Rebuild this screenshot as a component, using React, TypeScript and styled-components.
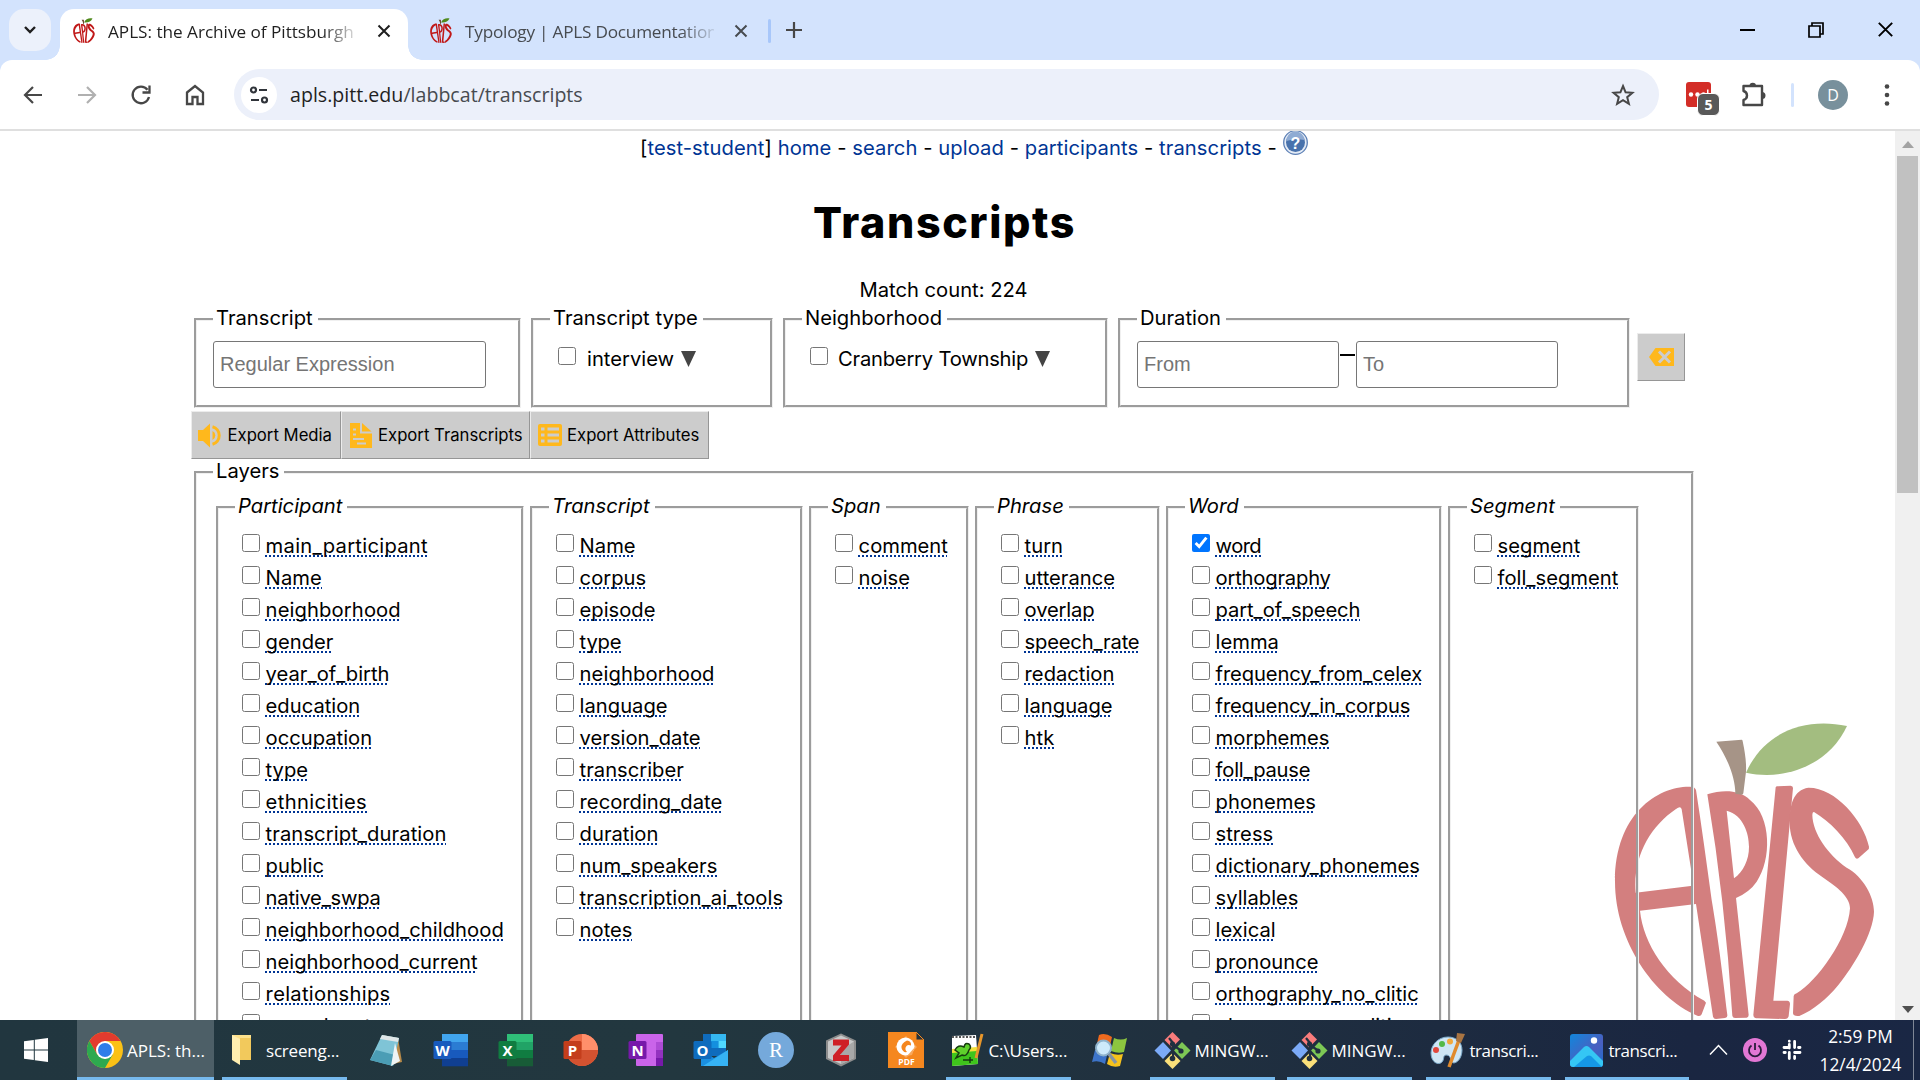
import React from 'react';
import styled, { createGlobalStyle } from 'styled-components';

const GlobalStyle = createGlobalStyle`
  *, *::before, *::after { box-sizing: border-box; }
  html, body { margin: 0; padding: 0; overflow: hidden; }
  body { background: #fff; }
`;

const ui = '"Open Sans", "Noto Sans", sans-serif';
const body = 'Inter, "Liberation Sans", sans-serif';
const amber = '#ffb81c';

const Screen = styled.div`
  width: 1920px;
  height: 1080px;
  display: flex;
  flex-direction: column;
  overflow: hidden;
  font-family: ${ui};
`;

/* ---------- browser chrome ---------- */

const TabStrip = styled.div`
  height: 60px;
  flex: none;
  background: #d3e3fd;
  display: flex;
  align-items: flex-start;
  padding: 9px 0 0 9px;
`;

const TabSearch = styled.button`
  width: 42px;
  height: 42px;
  border: 0;
  padding: 0;
  border-radius: 15px;
  background: #ecf1fb;
  display: grid;
  place-items: center;
`;

const Tab = styled.div<{ $active?: boolean; $w: number }>`
  position: relative;
  width: ${p => p.$w}px;
  height: 51px;
  margin-left: ${p => (p.$active ? 9 : 0)}px;
  padding: 0 0 8px ${p => (p.$active ? 13 : 22)}px;
  display: flex;
  align-items: center;
  border-radius: 14px 14px 0 0;
  background: ${p => (p.$active ? '#fff' : 'transparent')};
  &::before, &::after {
    content: '';
    display: ${p => (p.$active ? 'block' : 'none')};
    position: absolute;
    bottom: 0;
    width: 14px;
    height: 14px;
  }
  &::before { left: -14px; background: radial-gradient(circle at 0 0, transparent 13.5px, #fff 14px); }
  &::after { right: -14px; background: radial-gradient(circle at 100% 0, transparent 13.5px, #fff 14px); }
`;

const TabTitle = styled.span<{ $w: number; $dim?: boolean }>`
  width: ${p => p.$w}px;
  margin: 2px 0 0 13px;
  overflow: hidden;
  white-space: nowrap;
  font-size: 17.2px;
  letter-spacing: ${p => (p.$dim ? -0.22 : -0.03)}px;
  line-height: 26px;
  color: ${p => (p.$dim ? '#474b50' : '#1f1f1f')};
  mask-image: linear-gradient(90deg, #000 calc(100% - 34px), rgba(0, 0, 0, 0.15));
`;

const TabClose = styled.span<{ $gap: number }>`
  margin-left: ${p => p.$gap}px;
  width: 14px;
  height: 14px;
  display: grid;
`;

const StripDivider = styled.div`
  width: 3px;
  height: 24px;
  margin: 10px 0 0 7px;
  border-radius: 2px;
  background: #a8c7fa;
`;

const NewTab = styled.div`
  margin: 12px 0 0 14px;
  width: 18px;
  height: 18px;
  display: grid;
`;

const WindowButtons = styled.div`
  margin: 12px 26px 0 auto;
  display: flex;
  align-items: center;
  gap: 53px;
  svg { display: block; }
`;

const Toolbar = styled.div`
  height: 71px;
  flex: none;
  display: flex;
  align-items: center;
  padding: 0 27px 0 21px;
  background: #fff;
  border-bottom: 2px solid #dfdfdf;
  svg { display: block; flex: none; }
`;

const StripUnderlay = styled.div`
  background: linear-gradient(#d3e3fd 0 14px, #fff 14px);
  flex: none;
  ${Toolbar} { border-radius: 12px 12px 0 0; }
`;

const NavIcons = styled.div`
  display: flex;
  gap: 30px;
  margin-right: 27px;
`;

const Omnibox = styled.div`
  width: 1425px;
  height: 51px;
  display: flex;
  align-items: center;
  padding: 0 24px 0 7px;
  border-radius: 26px;
  background: #ecf0fa;
`;

const SiteInfo = styled.span`
  width: 36px;
  height: 36px;
  border-radius: 50%;
  background: #fff;
  display: grid;
  place-items: center;
`;

const Url = styled.span`
  margin-left: 13px;
  flex: 1;
  font-size: 19.6px;
  line-height: 30px;
  color: #474b50;
  b { font-weight: 400; color: #1f1f1f; }
`;

const Extension = styled.div`
  position: relative;
  width: 25px;
  height: 25px;
  margin-left: 27px;
  border-radius: 3px;
  background: #d32d27;
`;

const ExtensionBadge = styled.span`
  position: absolute;
  left: 11px;
  top: 11px;
  width: 23px;
  height: 23px;
  border: 1px solid #fff;
  border-radius: 6px;
  background: #595959;
  color: #fff;
  font: 700 14px/21px ${ui};
  text-align: center;
`;

const PuzzleSlot = styled.div`margin-left: 30px;`;

const ToolDivider = styled.div`
  width: 3px;
  height: 24px;
  margin-left: 24px;
  border-radius: 2px;
  background: #d3e3fd;
`;

const Avatar = styled.div`
  width: 30px;
  height: 30px;
  margin: 0 auto 0 24px;
  border-radius: 50%;
  background: #78909c;
  color: #fff;
  font-size: 16px;
  line-height: 30px;
  text-align: center;
`;

/* ---------- web page ---------- */

const Viewport = styled.div`
  flex: 1;
  min-height: 0;
  display: flex;
  background: #fff;
`;

const Page = styled.main`
  position: relative;
  width: 1895px;
  overflow: hidden;
  font-family: ${body};
  font-size: 20.2px;
  color: #000;
`;

const Watermark = styled.div`
  position: absolute;
  left: 1590px;
  top: 569px;
  svg { display: block; }
`;

const Content = styled.div`position: relative;`;

const SiteNav = styled.nav`
  height: 34px;
  display: flex;
  align-items: flex-start;
  padding-left: 640px;
  white-space: pre;
  line-height: 34px;
  letter-spacing: 0.07px;
  a { color: #003594; text-decoration: none; }
  svg { margin-top: -1px; }
`;

const Title = styled.h1`
  margin: 32px 0 0;
  width: 1889px;
  text-align: center;
  font-size: 43px;
  font-weight: 800;
  letter-spacing: 1.6px;
  line-height: 50px;
`;

const MatchCount = styled.div`
  width: 1887px;
  margin-top: 29px;
  height: 30px;
  line-height: 27px;
  text-align: center;
`;

const Filters = styled.div`
  display: flex;
  gap: 10px;
  padding-left: 194px;
`;

const Box = styled.fieldset<{ $w: number; $h: number }>`
  width: ${p => p.$w}px;
  height: ${p => p.$h}px;
  min-width: 0;
  flex: none;
  margin: 0;
  padding: 8px 0 0 16px;
  border: 3px groove #f0f0f0;
`;

const Legend = styled.legend<{ $italic?: boolean }>`
  height: 27px;
  padding: 0 5px 0 3px;
  line-height: 23px;
  font-style: ${p => (p.$italic ? 'italic' : 'normal')};
`;

const TextInput = styled.input<{ $w: number }>`
  width: ${p => p.$w}px;
  height: 47px;
  padding: 0 6px 1px;
  border: 1px solid #767676;
  border-radius: 3px;
  font: 20px "Liberation Sans", Arial, sans-serif;
  background: #fff;
  &::placeholder { color: #757575; }
`;

const Check = styled.input.attrs({ type: 'checkbox' })`
  width: 18px;
  height: 18px;
  margin: 0;
  flex: none;
`;

const Option = styled.div<{ $gap: number; $track?: number }>`
  display: flex;
  padding: 6px 0 0 8px;
  > span {
    margin: 0 7px 0 ${p => p.$gap}px;
    line-height: 24px;
    letter-spacing: ${p => p.$track || 0}px;
  }
  svg { margin-top: 4px; }
`;

const Range = styled.div`
  display: flex;
`;

const RangeDash = styled.span`
  width: 15px;
  margin: 13px 1px 0;
  height: 2px;
  background: #000;
`;

const ActionButton = styled.button<{ $w: number; $pad: number; $gap: number }>`
  width: ${p => p.$w}px;
  height: 48px;
  flex: none;
  display: flex;
  align-items: center;
  gap: ${p => p.$gap}px;
  padding: 0 0 0 ${p => p.$pad}px;
  border: 1px solid;
  border-color: #ececec #969696 #969696 #ececec;
  background: #ccc;
  font: 16.7px ${body};
  color: #000;
  white-space: nowrap;
  svg { display: block; flex: none; }
`;

const ClearSlot = styled.div`margin: 27px 0 0 -3px;`;

const Actions = styled.div`
  display: flex;
  padding: 3px 0 0 191px;
`;

const LayersIndent = styled.div`padding-left: 194px;`;

const LayerColumns = styled.div`
  display: flex;
  padding-left: 3px;
  gap: 6px;
`;

const LayerList = styled.ul`
  list-style: none;
  margin: 0;
  padding: 1px 0 0 7px;
`;

const LayerRow = styled.li`
  height: 32px;
  display: flex;
  align-items: flex-start;
  padding-top: 4px;
`;

const LayerName = styled.span<{ $track?: number }>`
  margin-left: 5.6px;
  line-height: 24px;
  white-space: nowrap;
  letter-spacing: ${p => p.$track || 0}px;
  text-decoration: underline dotted #003594 2px;
  text-underline-offset: 2px;
  text-decoration-skip-ink: none;
`;

const Scrollbar = styled.div`
  width: 25px;
  display: flex;
  flex-direction: column;
  align-items: center;
  background: #f0f0f0;
  padding: 10px 0 7px;
  svg { display: block; flex: none; }
`;

const ScrollThumb = styled.div`
  width: 21px;
  height: 337px;
  margin: 8px 0 auto;
  background: #c1c1c1;
`;

/* ---------- taskbar ---------- */

const Taskbar = styled.footer`
  height: 60px;
  flex: none;
  display: flex;
  background: linear-gradient(90deg, #21363f 0%, #22373f 35%, #20303f 62%, #1a2641 88%, #1a2744 100%);
  color: #fff;
  svg { display: block; flex: none; }
`;

const Slot = styled.div<{ $w: number; $ml?: number }>`
  width: ${p => p.$w}px;
  margin-left: ${p => p.$ml || 0}px;
  flex: none;
  display: grid;
  place-items: center;
`;

const Task = styled.div<{ $w: number; $ml?: number; $pad?: number; $active?: boolean; $gap?: number; $track?: number }>`
  width: ${p => p.$w}px;
  margin-left: ${p => p.$ml || 0}px;
  padding-left: ${p => p.$pad ?? 4}px;
  flex: none;
  display: flex;
  align-items: center;
  gap: ${p => p.$gap ?? 4}px;
  background: ${p => (p.$active ? '#4d5f67' : 'transparent')};
  box-shadow: inset 0 -3px 0 #76b9ed;
  font-size: 17px;
  letter-spacing: ${p => p.$track || 0}px;
  white-space: nowrap;
`;

const Tray = styled.div`
  display: flex;
  align-items: center;
  margin-left: 20px;
  gap: 15px;
`;

const Clock = styled.div`
  width: 90px;
  margin: 3px 0 0 14px;
  text-align: center;
  font-size: 17.3px;
  line-height: 28px;
`;

const ShowDesktop = styled.div`
  width: 7px;
  margin-left: auto;
  border-left: 1px solid #7f8796;
`;

/* ---------- drawings ---------- */

const Apple = ({ w, h, red, stem, leaf, box }: { w: number; h: number; red: string; stem: string; leaf: string; box: string }) => (
  <svg width={w} height={h} viewBox={box} preserveAspectRatio="none">
    <g fill={red} fillRule="evenodd">
      <path d="M300 260C205 258 75 340 75 545C75 720 190 890 322 947Q332 950 335 943L348 908L343 902C230 840 160 730 150 632L318 612L369 950Q371 957 378 957L405 954Q413 953 412 945C395 800 385 720 365 600C350 490 335 380 318 270Q315 260 300 260ZM275 328L303 507L308 557L137 578C128 470 180 380 258 327Q272 316 275 328Z" />
      <path d="M352 283C400 268 450 270 480 300C545 350 545 480 500 545Q480 575 438 594L476 945Q476 952 470 953L435 954Q428 954 427 947Q405 600 352 283ZM410 332C460 345 477 400 477 440C477 480 460 515 432 535Z" />
      <path d="M557 262Q558 259 562 259L602 257Q609 258 609 264L550 902L592 902Q600 903 600 912L596 948Q594 957 585 957L503 955Q490 955 490 945Z" />
      <path d="M655 263C735 262 820 360 837 440Q838 447 833 450L805 475Q799 479 795 472C770 415 720 365 672 336Q667 335 667 345C668 400 715 465 770 503C820 530 852 590 852 635C850 700 790 800 745 855C710 898 670 930 628 948Q610 950 609 940L611 888Q612 882 620 880C680 845 775 715 780 625C780 590 740 560 700 533C640 495 600 435 599 370C598 315 610 270 655 263Z" />
    </g>
    <path fill={stem} d="M379 125L455 119Q458 119 458 124Q470 180 468 215L460 280Q459 284 454 284L436 281C436 230 410 170 379 125Z" />
    <path fill={leaf} d="M468 218C520 100 640 50 771 78C720 190 590 245 468 218Z" />
  </svg>
);

const Favicon = () => <Apple w={22} h={25} red="#c01818" stem="#6b4a30" leaf="#4f8a1c" box="70 60 790 900" />;

const Cross = ({ size = 14, c = '#1f1f1f', sw = 2 }: { size?: number; c?: string; sw?: number }) => (
  <svg width={size} height={size} viewBox="0 0 14 14"><path d="M1.5 1.5L12.5 12.5M12.5 1.5L1.5 12.5" stroke={c} strokeWidth={sw} /></svg>
);

const Down = () => <svg width="15" height="16" viewBox="0 0 15 16"><path d="M0 0H15L7.5 16Z" fill="#444" /></svg>;

const OfficeIcon = ({ letter, tile, shades }: { letter: string; tile: string; shades: string[] }) => (
  <svg width="36" height="36" viewBox="0 0 36 36">
    {shades.map((s, i) => <rect key={i} x="9" y={2 + i * 8} width="26" height="8.3" fill={s} />)}
    <rect x="0.5" y="9" width="18" height="18" rx="1.5" fill={tile} />
    <text x="9.5" y="23.5" fontSize="15" fontWeight="700" fontFamily="Open Sans" textAnchor="middle" fill="#fff">{letter}</text>
  </svg>
);

const GitIcon = () => (
  <svg width="37" height="37" viewBox="0 0 37 37">
    <path d="M18.500 0L26 7.500L18 15.500L10.500 8Z" fill="#f97c7c" />
    <path d="M9 10L17 18.500L9 27L0.500 18.500Z" fill="#7baaf7" />
    <path d="M28 10L36.500 18.500L28 27L20 18.500Z" fill="#7dc855" />
    <path d="M18.500 21L26.500 29L18.500 37L10.500 29Z" fill="#fbe07a" />
    <path d="M15 6L19 11V27M19 13L27 18.500" stroke="#20303f" strokeWidth="2.200" fill="none" />
    <circle cx="18.500" cy="12" r="2.600" fill="#20303f" /><circle cx="18.500" cy="26.500" r="2.800" fill="#20303f" /><circle cx="27" cy="19" r="2.600" fill="#20303f" />
  </svg>
);

/* ---------- data ---------- */

type Layer = string | [string, number];
const columns: { title: string; w: number; layers: Layer[] }[] = [
  { title: 'Participant', w: 308, layers: [['main_participant', 0.28], ['Name', 0.1], ['neighborhood', 0.12], 'gender', 'year_of_birth', 'education', 'occupation', 'type', ['ethnicities', 0.37], ['transcript_duration', 0.08], ['public', 0.1], ['native_swpa', -0.24], ['neighborhood_childhood', 0.05], 'neighborhood_current', ['relationships', 0.28], 'speech_rate'] },
  { title: 'Transcript', w: 273, layers: ['Name', 'corpus', 'episode', ['type', -0.2], ['neighborhood', 0.1], 'language', 'version_date', 'transcriber', 'recording_date', 'duration', 'num_speakers', ['transcription_ai_tools', 0.12], 'notes'] },
  { title: 'Span', w: 160, layers: ['comment', 'noise'] },
  { title: 'Phrase', w: 185, layers: ['turn', 'utterance', ['overlap', -0.15], ['speech_rate', -0.2], 'redaction', 'language', 'htk'] },
  { title: 'Word', w: 276, layers: [['word', -0.6], ['orthography', -0.2], ['part_of_speech', -0.1], 'lemma', ['frequency_from_celex', -0.12], ['frequency_in_corpus', -0.17], 'morphemes', ['foll_pause', -0.22], 'phonemes', 'stress', ['dictionary_phonemes', 0.05], 'syllables', 'lexical', 'pronounce', 'orthography_no_clitic', 'phonemes_no_clitic'] },
  { title: 'Segment', w: 191, layers: ['segment', 'foll_segment'] },
];

const links = ['home', 'search', 'upload', 'participants', 'transcripts'];

export default function App() {
  return (
    <Screen>
      <GlobalStyle />
      <TabStrip>
        <TabSearch>
          <svg width="14" height="10" viewBox="0 0 14 10"><path d="M2 2L7 7L12 2" fill="none" stroke="#1f1f1f" strokeWidth="2.400" /></svg>
        </TabSearch>
        <Tab $active $w={348}>
          <Favicon />
          <TabTitle $w={247}>APLS: the Archive of Pittsburgh</TabTitle>
          <TabClose $gap={22}><Cross /></TabClose>
        </Tab>
        <Tab $w={353}>
          <Favicon />
          <TabTitle $w={249} $dim>Typology | APLS Documentation</TabTitle>
          <TabClose $gap={20}><Cross c="#474b50" /></TabClose>
        </Tab>
        <StripDivider />
        <NewTab><svg width="18" height="18" viewBox="0 0 18 18"><path d="M9 1V17M1 9H17" stroke="#474747" strokeWidth="2.200" /></svg></NewTab>
        <WindowButtons>
          <svg width="15" height="16"><path d="M0 8H15" stroke="#000" strokeWidth="2" /></svg>
          <svg width="16" height="16"><path d="M1 4H12V15H1ZM4 4V1H15V12H12" fill="none" stroke="#000" strokeWidth="1.700" /></svg>
          <Cross size={17} c="#000" sw={1.6} />
        </WindowButtons>
      </TabStrip>
      <StripUnderlay>
        <Toolbar>
          <NavIcons>
            <svg width="24" height="24" viewBox="0 0 24 24" fill="none" stroke="#474747" strokeWidth="2.200"><path d="M21 12H4M12 4L4 12L12 20" /></svg>
            <svg width="24" height="24" viewBox="0 0 24 24" fill="none" stroke="#b0b0b0" strokeWidth="2.200"><path d="M3 12H20M12 4L20 12L12 20" /></svg>
            <svg width="24" height="24" viewBox="0 0 24 24" fill="none" stroke="#474747" strokeWidth="2.300"><path d="M20 14A8.300 8.300 0 1 1 18.500 6.800M20.500 2.500V9.500H13.500" /></svg>
            <svg width="24" height="24" viewBox="0 0 24 24" fill="none" stroke="#474747" strokeWidth="2.300"><path d="M4 9.500L12 3L20 9.500V21H14.500V14H9.500V21H4Z" /></svg>
          </NavIcons>
          <Omnibox>
            <SiteInfo>
              <svg width="20" height="18" viewBox="0 0 20 18" fill="none" stroke="#30343a" strokeWidth="2.200"><circle cx="4.500" cy="4" r="2.500" /><path d="M10 4H18M2 14H10" /><circle cx="15.500" cy="14" r="2.500" /></svg>
            </SiteInfo>
            <Url><b>apls.pitt.edu</b>/labbcat/transcripts</Url>
            <svg width="24" height="24" viewBox="0 0 24 24" fill="none" stroke="#474747" strokeWidth="2"><path d="M12 3L14.600 9.300L21.400 9.800L16.200 14.200L17.900 20.800L12 17.200L6.100 20.800L7.800 14.200L2.600 9.800L9.400 9.300Z" /></svg>
          </Omnibox>
          <Extension>
            <svg width="25" height="25"><g fill="#fff"><circle cx="5" cy="12.500" r="2.200" /><circle cx="11.500" cy="12.500" r="2.200" /><circle cx="17.500" cy="12.500" r="2.200" /><rect x="21" y="7.500" width="1.500" height="10" /></g></svg>
            <ExtensionBadge>5</ExtensionBadge>
          </Extension>
          <PuzzleSlot>
            <svg width="26" height="28" viewBox="0 0 26 28"><path d="M2.500 5H21V24H2.500V19Q6 18 6 14.500Q6 11 2.500 10Z" fill="none" stroke="#474747" strokeWidth="2.400" strokeLinejoin="round" /><path d="M8.500 5A3.200 3.200 0 0 1 15 5ZM21 11A3.500 3.500 0 0 1 21 18Z" fill="#474747" /></svg>
          </PuzzleSlot>
          <ToolDivider />
          <Avatar>D</Avatar>
          <svg width="12" height="24" fill="#474747"><circle cx="6" cy="3.500" r="2.300" /><circle cx="6" cy="12" r="2.300" /><circle cx="6" cy="20.500" r="2.300" /></svg>
        </Toolbar>
      </StripUnderlay>

      <Viewport>
        <Page>
          <Watermark>
            <Apple w={330} h={320} red="#d37f7f" stem="#a69487" leaf="#a3bd80" box="0 0 990 960" />
          </Watermark>
          <Content>
            <SiteNav>
              [<a>test-student</a>] {links.map(l => <React.Fragment key={l}><a>{l}</a> - </React.Fragment>)}
              <svg width="25" height="25" viewBox="0 0 25 25"><circle cx="12.500" cy="12.500" r="11.800" fill="#e4ebf5" stroke="#5b7fb5" strokeWidth="1.300" /><circle cx="12.500" cy="12.500" r="9.500" fill="#4872ac" /><path d="M3.500 11A9 9 0 0 1 21.500 10Q12 8 3.500 11Z" fill="#8fabd3" /><text x="12.500" y="18.500" textAnchor="middle" fontSize="16" fontWeight="700" fontFamily="Liberation Sans" fill="#fff">?</text></svg>
            </SiteNav>
            <Title>Transcripts</Title>
            <MatchCount>Match count: 224</MatchCount>
            <Filters>
              <Box $w={327} $h={102}>
                <Legend>Transcript</Legend>
                <TextInput $w={273} placeholder="Regular Expression" />
              </Box>
              <Box $w={242} $h={102}>
                <Legend>Transcript type</Legend>
                <Option $gap={11}><Check /><span>interview</span><Down /></Option>
              </Box>
              <Box $w={325} $h={102}>
                <Legend>Neighborhood</Legend>
                <Option $gap={10} $track={-0.22}><Check /><span>Cranberry Township</span><Down /></Option>
              </Box>
              <Box $w={512} $h={102}>
                <Legend>Duration</Legend>
                <Range>
                  <TextInput $w={202} placeholder="From" />
                  <RangeDash />
                  <TextInput $w={202} placeholder="To" />
                </Range>
              </Box>
              <ClearSlot>
                <ActionButton $w={48} $pad={11} $gap={0}>
                  <svg width="25" height="18" viewBox="0 0 25 18"><path d="M6.500 0H25V18H6.500L0 9Z" fill={amber} /><path d="M10 3.500L21 14.500M21 3.500L10 14.500" stroke="#ccc" strokeWidth="3" /></svg>
                </ActionButton>
              </ClearSlot>
            </Filters>
            <Actions>
              <ActionButton $w={150} $pad={6} $gap={4.5}>
                <svg width="25" height="25" viewBox="0 0 25 25"><path d="M0 7H5L12 0.500V24.500L5 18H0Z" fill={amber} /><path d="M14.500 3.800A9 9 0 0 1 14.500 21.200" fill="none" stroke={amber} strokeWidth="3" /><path d="M14.500 8A5 5 0 0 1 14.500 17Z" fill={amber} /></svg>
                Export Media
              </ActionButton>
              <ActionButton $w={189} $pad={8} $gap={6}>
                <svg width="22" height="25" viewBox="0 0 22 25"><path d="M0 0H10V10.500H22V25H0Z" fill={amber} /><path d="M12 0L21.500 8.500H12Z" fill={amber} /><path d="M3 6.500H6M3 11.500H6M3 16H14M7 20.500H16" stroke="#ccc" strokeWidth="2" /></svg>
                Export Transcripts
              </ActionButton>
              <ActionButton $w={179} $pad={7} $gap={5}>
                <svg width="24" height="22" viewBox="0 0 24 22"><rect width="24" height="22" rx="2" fill={amber} /><path d="M3 5H6.500M3 11H6.500M3 17H6.500M9.500 5H21M9.500 11H21M9.500 17H21" stroke="#ccc" strokeWidth="3" /></svg>
                Export Attributes
              </ActionButton>
            </Actions>
            <LayersIndent>
              <Box $w={1500} $h={900}>
                <Legend>Layers</Legend>
                <LayerColumns>
                  {columns.map(c => (
                    <Box key={c.title} $w={c.w} $h={800}>
                      <Legend $italic>{c.title}</Legend>
                      <LayerList>
                        {c.layers.map(l => {
                          const [name, track] = typeof l === 'string' ? [l, 0] : l;
                          return (
                            <LayerRow key={name}>
                              <Check defaultChecked={name === 'word'} />
                              <LayerName $track={track}>{name}</LayerName>
                            </LayerRow>
                          );
                        })}
                      </LayerList>
                    </Box>
                  ))}
                </LayerColumns>
              </Box>
            </LayersIndent>
          </Content>
        </Page>
        <Scrollbar>
          <svg width="12" height="7"><path d="M0 7L6 0L12 7Z" fill="#a3a3a3" /></svg>
          <ScrollThumb />
          <svg width="12" height="7"><path d="M0 0H12L6 7Z" fill="#505050" /></svg>
        </Scrollbar>
      </Viewport>

      <Taskbar>
        <Slot $w={72}>
          <svg width="24" height="24" viewBox="0 0 24 24" fill="#fff"><path d="M0 3.300L9.800 2V11.500H0ZM10.800 1.800L24 0V11.500H10.800ZM0 12.500H9.800V22L0 20.700ZM10.800 12.500H24V24L10.800 22.200Z" /></svg>
        </Slot>
        <Task $w={137} $ml={5} $pad={10} $active>
          <svg width="36" height="36" viewBox="0 0 36 36">
            <circle cx="18" cy="18" r="18" fill="#fbc116" />
            <path d="M18 9H33.600A18 18 0 0 0 2.400 9L10.200 22.500Z" fill="#e33b2e" />
            <path d="M2.400 9A18 18 0 0 0 18 36L25.800 22.500L18 27L10.200 22.500Z" fill="#2da94f" />
            <circle cx="18" cy="18" r="9" fill="#fff" /><circle cx="18" cy="18" r="7" fill="#2f7de9" />
          </svg>
          APLS: th...
        </Task>
        <Task $w={125} $ml={8} $pad={10} $gap={14} $track={-0.2}>
          <svg width="20" height="32" viewBox="0 0 20 32"><path d="M0 1H19V26H0Z" fill="#fce18c" /><path d="M19 17V26H8V4H19Z" fill="#f2c95c" /><path d="M0 1L8 5V31L0 26Z" fill="#ffeeb0" /></svg>
          screeng...
        </Task>
        <Slot $w={65} $ml={6.5}>
          <svg width="34" height="34" viewBox="0 0 34 34"><path d="M13 2L29 5L33 29L24 31Z" fill="#b78a4a" /><path d="M13 2L30 5L24 33L1 27Z" fill="#7fc4d6" /><path d="M13 2L30 5L29 9L11 6Z" fill="#dfe6e8" /><path d="M24 33L1 27L7 17L26 22Z" fill="#4b9db5" /><path d="M26 10L31 28L22 33Z" fill="#eef4f5" /></svg>
        </Slot>
        <Slot $w={65}><OfficeIcon letter="W" tile="#185abd" shades={['#41a5ee', '#2b7cd3', '#185abd', '#103f91']} /></Slot>
        <Slot $w={65}><OfficeIcon letter="X" tile="#107c41" shades={['#2fbf78', '#21a366', '#107c41', '#185c37']} /></Slot>
        <Slot $w={65}>
          <svg width="36" height="36" viewBox="0 0 36 36"><circle cx="19" cy="18" r="16" fill="#ed6c47" /><path d="M19 2A16 16 0 0 1 35 18H19Z" fill="#ff8f6b" /><path d="M3 18H35A16 16 0 0 1 3 18Z" fill="#d35230" /><rect x="0.500" y="9" width="18" height="18" rx="1.500" fill="#c43e1c" /><text x="9.500" y="23.500" fontSize="15" fontWeight="700" fontFamily="Open Sans" textAnchor="middle" fill="#fff">P</text></svg>
        </Slot>
        <Slot $w={65}>
          <svg width="36" height="36" viewBox="0 0 36 36"><rect x="8" y="2" width="27" height="32" rx="1" fill="#ca64ea" /><path d="M28 10H35V18H28Z" fill="#ae4bd5" /><path d="M28 18H35V26H28Z" fill="#9332bf" /><path d="M28 26H35V34H28Z" fill="#7719aa" /><rect x="0.500" y="9" width="18" height="18" rx="1.500" fill="#7719aa" /><text x="9.500" y="23.500" fontSize="15" fontWeight="700" fontFamily="Open Sans" textAnchor="middle" fill="#fff">N</text></svg>
        </Slot>
        <Slot $w={65}>
          <svg width="36" height="36" viewBox="0 0 36 36"><rect x="10" y="2" width="23" height="22" fill="#0f6cbd" /><path d="M18 2H33V9H18Z" fill="#35b8f1" /><path d="M18 9H25.500V16H18Z" fill="#1490df" /><path d="M25.500 9H33V16H25.500Z" fill="#50d9ff" /><path d="M8 18L21 26L35 18V34H8Z" fill="#1a8fe0" /><path d="M35 18V34H10Z" fill="#36b3f5" /><rect x="0.500" y="9" width="18" height="18" rx="1.500" fill="#0f6cbd" /><text x="9.500" y="23.500" fontSize="15" fontWeight="700" fontFamily="Open Sans" textAnchor="middle" fill="#fff">O</text></svg>
        </Slot>
        <Slot $w={65}>
          <svg width="36" height="36" viewBox="0 0 36 36"><circle cx="18" cy="18" r="18" fill="#75a9db" /><text x="18" y="25" fontSize="21" fontFamily="Liberation Serif" textAnchor="middle" fill="#fff">R</text></svg>
        </Slot>
        <Slot $w={65}>
          <svg width="32" height="34" viewBox="0 0 32 34"><path d="M16 0.500L31 7.500V26L16 33.500L1 26V7.500Z" fill="#8d8d8d" /><path d="M16 2.500L29 8.500V25L16 31L3 25V8.500Z" fill="#c9c9c9" /><path d="M16 17L29 8.500V25L16 31Z" fill="#a8a8a8" /><path d="M8 6.500H24V11.500L15 22H24V28H8V22.500L16.500 12.500H8Z" fill="#cf2026" /></svg>
        </Slot>
        <Slot $w={65}>
          <svg width="36" height="36" viewBox="0 0 36 36"><path d="M0 0H28L36 8V36H0Z" fill="#f5871f" /><path d="M28 0V8H36Z" fill="#26333c" stroke="#f5871f" /><path d="M18 4L29 15L18 26L7 15Z" fill="#f9a85b" /><circle cx="17.500" cy="14.500" r="9" fill="#fff" /><path d="M19 8.500Q13 11 13.500 16Q15 21 19 20Q16 17 18.500 14Q20 12.500 23 13.500Q23.500 9 19 8.500Z" fill="#f5871f" /><path d="M27 15L24 23L19 24Z" fill="#f9a85b" /><text x="18.500" y="33" fontSize="8.500" fontWeight="700" fontFamily="Open Sans" textAnchor="middle" fill="#fff">PDF</text></svg>
        </Slot>
        <Task $w={125} $ml={7} $gap={5} $track={-0.1}>
          <svg width="34" height="34" viewBox="0 0 34 34"><path d="M2 3L26 2L28 31L2 33Z" fill="#fff" /><path d="M2 19L27 17L28 31L2 33Z" fill="#3fc51c" /><path d="M2 16L27 14V18L2 20Z" fill="#f1e13a" /><path d="M5 17Q8 11 14 14Q15 9 19 11Q22 14 19 17Q17 24 12 22L6 25L9 20Z" fill="#5fd02c" stroke="#173c10" strokeWidth="1.500" /><path d="M13 27H23M20 24V30" stroke="#173c10" strokeWidth="1.500" /><path d="M2 4H26" stroke="#555" strokeWidth="2" strokeDasharray="2 1.500" /><path d="M32 1L26 25" stroke="#e8962a" strokeWidth="3" /></svg>
          C:\Users...
        </Task>
        <Slot $w={79}>
          <svg width="36" height="34" viewBox="0 0 36 34"><path d="M7 2Q13 -1 20 4L17 17Q11 13 4 15Z" fill="#ee6a1e" /><path d="M22 5Q29 8 35 5L32 19Q26 21 19 18Z" fill="#8cc63f" /><path d="M3 17Q10 14 16 18L13 31Q7 27 0 29Z" fill="#3d74c9" /><path d="M18 20Q25 23 31 21L28 33Q21 35 15 31Z" fill="#f6c21c" /><circle cx="11.500" cy="15" r="7.500" fill="#cdeafb" stroke="#8fb3cc" strokeWidth="2" /><path d="M17 21L24 30" stroke="#8795a3" strokeWidth="3.500" /></svg>
        </Slot>
        <Task $w={125}><GitIcon />MINGW...</Task>
        <Task $w={125} $ml={12}><GitIcon />MINGW...</Task>
        <Task $w={125} $ml={14} $track={-0.45}>
          <svg width="36" height="36" viewBox="0 0 36 36"><path d="M18 5C8 5 1 13 1 21C1 30 8 34 12 30C15 27 12 23 17 23C22 24 20 31 24 31C29 30 32 24 32 18C32 10 26 5 18 5Z" fill="#cfe6f5" stroke="#7ba9c9" /><circle cx="6" cy="18" r="3" fill="#e2483d" /><circle cx="12" cy="12" r="3" fill="#54b948" /><circle cx="20" cy="9.500" r="3" fill="#f3a93c" /><path d="M29 8L19 35" stroke="#e08a2c" strokeWidth="3.500" /><path d="M27 1L35 2L31 11L26 9Z" fill="#a87442" /></svg>
          transcri...
        </Task>
        <Task $w={124} $ml={14} $pad={5} $gap={6} $track={-0.45}>
          <svg width="33" height="33" viewBox="0 0 33 33"><defs><linearGradient id="ph" x1="0" y1="0" x2="1" y2="1"><stop offset="0" stopColor="#1187dc" /><stop offset="0.600" stopColor="#4a5fc0" /><stop offset="1" stopColor="#1b6fd0" /></linearGradient></defs><rect width="33" height="33" rx="3" fill="url(#ph)" /><path d="M0 27L14 13Q16.500 11 19 13L33 27V30Q33 33 30 33H3Q0 33 0 30Z" fill="#35c6f4" /><path d="M4 33L17 22Q19 21 21 22L32 33Z" fill="#1597e5" /><circle cx="24" cy="6.500" r="3.200" fill="#fff" /></svg>
          transcri...
        </Task>
        <Tray>
          <svg width="19" height="12" viewBox="0 0 19 12"><path d="M1 10.500L9.500 1.500L18 10.500" fill="none" stroke="#fff" strokeWidth="1.500" /></svg>
          <svg width="24" height="24" viewBox="0 0 24 24"><circle cx="12" cy="12" r="12" fill="#e277d4" /><path d="M8.500 7.500A6 6 0 1 0 15.500 7.500M12 5V12" fill="none" stroke="#2b1c3c" strokeWidth="1.800" /></svg>
          <svg width="20" height="22" viewBox="0 0 20 22" stroke="#fff" strokeWidth="2.800" strokeLinecap="round"><path d="M7.300 5.500V9M2 8.500H3.500M7.300 2.200V2.300M12.600 2.500V8.500M16.500 8.500H18M2 8.500H7M12.600 13.500H18M7.300 13.500V19.500M2 13.500H3.300M12.600 17.500V19.500" /></svg>
        </Tray>
        <Clock>2:59 PM<br />12/4/2024</Clock>
        <ShowDesktop />
      </Taskbar>
    </Screen>
  );
}
